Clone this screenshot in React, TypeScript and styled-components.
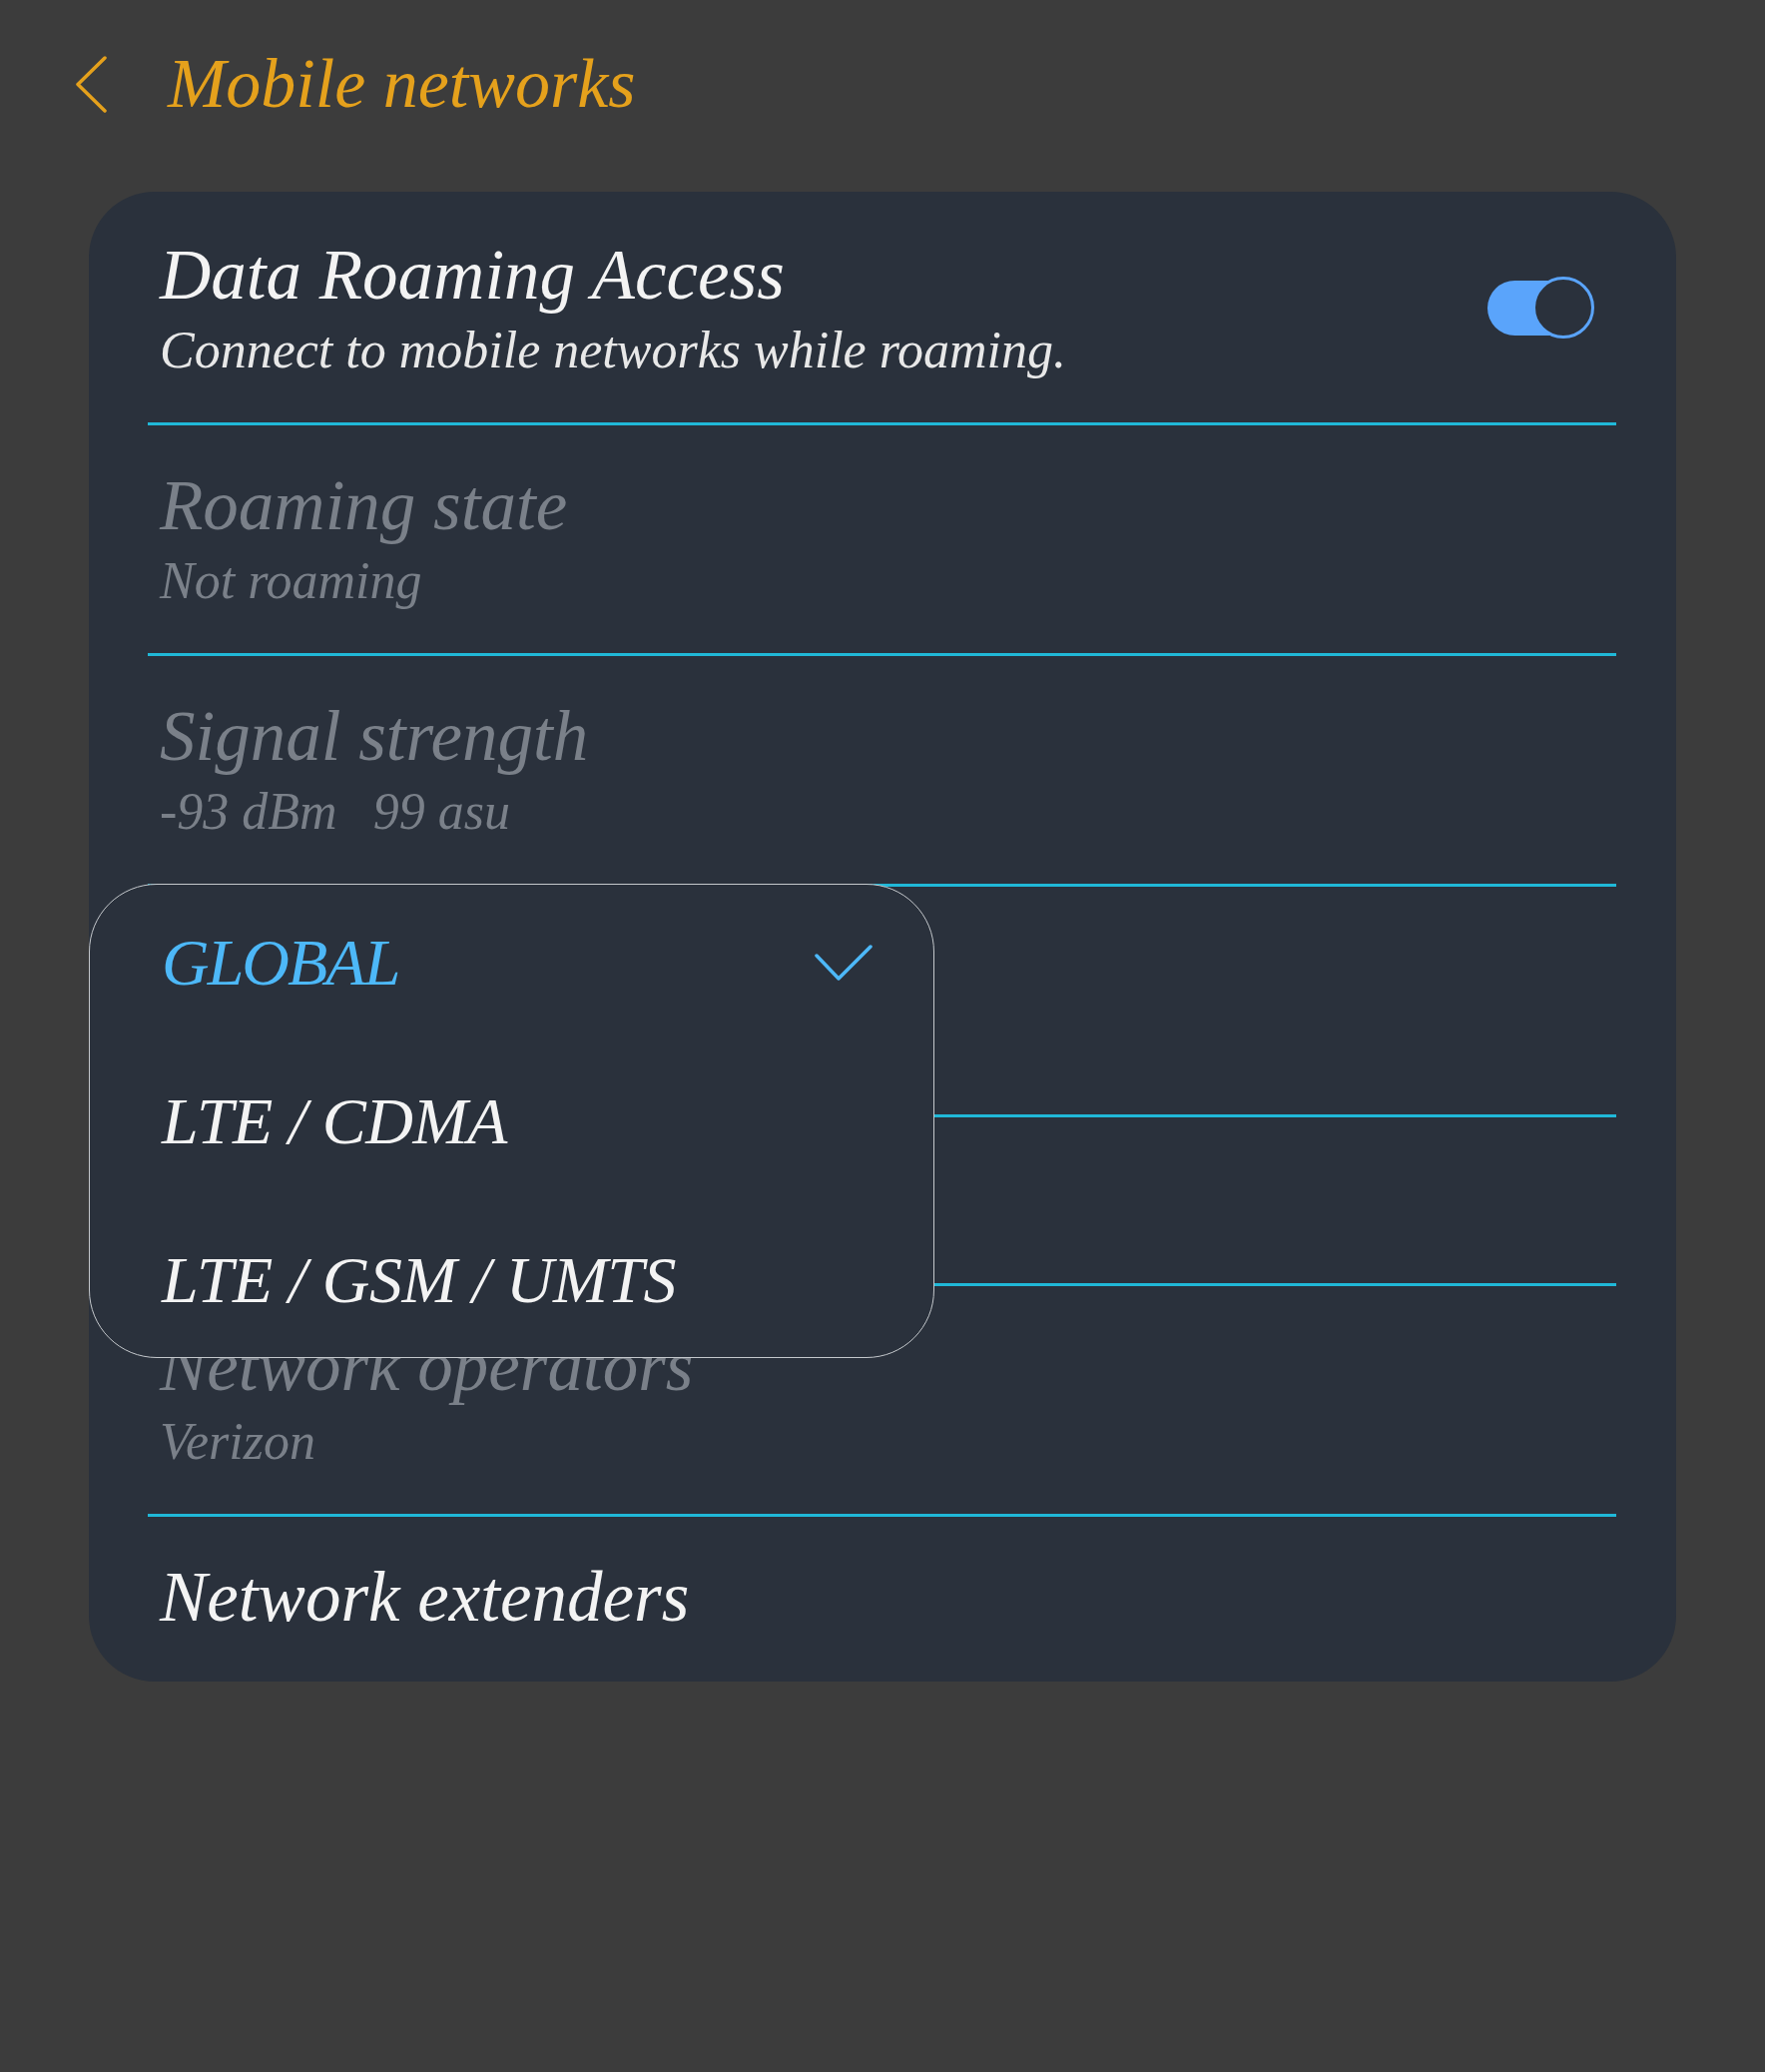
import React from "react";
import styled, { createGlobalStyle } from "styled-components";

const Global = createGlobalStyle`
  html, body {
    margin: 0;
    padding: 0;
    background: #3c3c3c;
  }
  body {
    font-family: "Liberation Serif", "Times New Roman", serif;
    font-style: italic;
  }
`;

const Page = styled.div`
  min-height: 2075px;
  background: #3c3c3c;
`;

const Header = styled.header`
  height: 168px;
  display: flex;
  align-items: center;
  padding-left: 76px;
  gap: 60px;
`;

const BackIcon = styled.svg`
  width: 32px;
  height: 58px;
  flex: none;
`;

const Title = styled.h1`
  margin: 0;
  font-size: 70px;
  line-height: 84px;
  font-weight: 400;
  font-style: italic;
  color: #e5a11c;
`;

const Card = styled.section`
  position: relative;
  margin: 24px 89px 0;
  background: #2a313c;
  border-radius: 66px;
  padding: 0 60px 0 59px;
`;

const Row = styled.div<{ $single?: boolean; $first?: boolean; $last?: boolean }>`
  display: flex;
  align-items: center;
  justify-content: space-between;
  padding: ${(p) =>
    p.$first
      ? "41px 22px 41px 12px"
      : p.$last
      ? "38px 22px 43px 12px"
      : p.$single
      ? "38px 22px 44px 12px"
      : "38px 22px 41px 12px"};
  border-bottom: ${(p) => (p.$last ? "none" : "3px solid #20b8d8")};
`;

const TextCol = styled.div`
  display: flex;
  flex-direction: column;
  gap: 3px;
`;

const RowTitle = styled.div<{ $dim?: boolean }>`
  font-size: 71px;
  line-height: 84px;
  color: ${(p) => (p.$dim ? "#7a8089" : "#f3f3f3")};
  white-space: nowrap;
`;

const RowSub = styled.div<{ $dim?: boolean }>`
  font-size: 52px;
  line-height: 62px;
  color: ${(p) => (p.$dim ? "#7a8089" : "#e8e8e8")};
  white-space: nowrap;
  display: flex;
  gap: 36px;
`;

const Toggle = styled.div`
  position: relative;
  width: 107px;
  height: 62px;
  flex: none;
`;

const Track = styled.div`
  position: absolute;
  left: 0;
  top: 4px;
  width: 96px;
  height: 55px;
  border-radius: 28px;
  background: #5aa4fb;
`;

const Thumb = styled.div`
  position: absolute;
  right: 0;
  top: 0;
  width: 62px;
  height: 62px;
  box-sizing: border-box;
  border-radius: 50%;
  border: 3px solid #5aa4fb;
  background: #2a313c;
`;

const Dropdown = styled.ul`
  position: absolute;
  left: 0;
  top: 693px;
  width: 847px;
  box-sizing: border-box;
  margin: 0;
  list-style: none;
  padding: 38px 61px 37px 72px;
  background: #2a313c;
  border: 1.5px solid #c4c8cc;
  border-radius: 68px;
  display: flex;
  flex-direction: column;
  gap: 79px;
  z-index: 2;
`;

const Option = styled.li<{ $selected?: boolean }>`
  display: flex;
  align-items: center;
  justify-content: space-between;
  font-size: 66px;
  line-height: 80px;
  letter-spacing: ${(p) => (p.$selected ? "-2px" : "-0.5px")};
  color: ${(p) => (p.$selected ? "#4db8f8" : "#f3f3f3")};
  white-space: nowrap;
`;

const Check = styled.svg`
  width: 58px;
  height: 36px;
  flex: none;
`;

type Item = { title: string; sub?: React.ReactNode; dim?: boolean };

const items: Item[] = [
  { title: "Roaming state", sub: "Not roaming", dim: true },
  {
    title: "Signal strength",
    sub: (
      <>
        <span>-93 dBm</span>
        <span>99 asu</span>
      </>
    ),
    dim: true,
  },
  { title: "Network mode", sub: "Global" },
  { title: "Access Point Names" },
  { title: "Network operators", sub: "Verizon", dim: true },
  { title: "Network extenders" },
];

export default function App() {
  return (
    <Page>
      <Global />
      <Header>
        <BackIcon viewBox="0 0 32 58" fill="none">
          <polyline
            points="29,3 2,29.5 29,56"
            stroke="#e5a11c"
            strokeWidth="3.5"
            strokeLinecap="round"
            strokeLinejoin="round"
          />
        </BackIcon>
        <Title>Mobile networks</Title>
      </Header>
      <Card>
        <Row $first>
          <TextCol>
            <RowTitle>Data Roaming Access</RowTitle>
            <RowSub>Connect to mobile networks while roaming.</RowSub>
          </TextCol>
          <Toggle>
            <Track />
            <Thumb />
          </Toggle>
        </Row>
        {items.map((it, i) => (
          <Row key={it.title} $single={!it.sub} $last={i === items.length - 1}>
            <TextCol>
              <RowTitle $dim={it.dim}>{it.title}</RowTitle>
              {it.sub && <RowSub $dim={it.dim}>{it.sub}</RowSub>}
            </TextCol>
          </Row>
        ))}
        <Dropdown>
          <Option $selected>
            <span>GLOBAL</span>
            <Check viewBox="0 0 58 36" fill="none">
              <polyline
                points="2,11 24,34 56,2"
                stroke="#4db8f8"
                strokeWidth="3.5"
                strokeLinecap="round"
                strokeLinejoin="round"
              />
            </Check>
          </Option>
          <Option>LTE / CDMA</Option>
          <Option>LTE / GSM / UMTS</Option>
        </Dropdown>
      </Card>
    </Page>
  );
}
